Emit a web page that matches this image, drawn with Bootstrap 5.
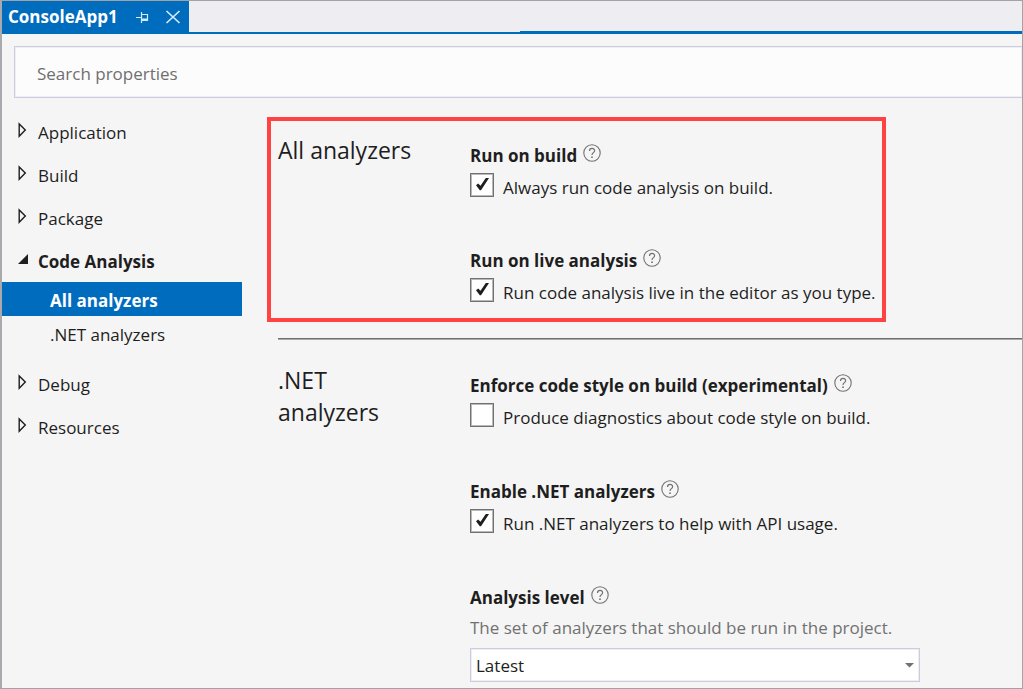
<!DOCTYPE html>
<html lang="en">
<head>
<meta charset="utf-8">
<meta name="viewport" content="width=device-width, initial-scale=1">
<title>ConsoleApp1</title>
<link href="https://cdn.jsdelivr.net/npm/bootstrap@5.3.0/dist/css/bootstrap.min.css" rel="stylesheet">
<style>
  :root { --vs-blue: #006cbe; --vs-ink: #1e1e1e; --vs-bg: #f5f5f5; --vs-line: #ccccdc; }
  body { font-family: "Open Sans", "Noto Sans", sans-serif; font-size: 17px; line-height: 24px; color: var(--vs-ink); background: var(--vs-bg); }
  button { font: inherit; color: inherit; background: none; border: 0; padding: 0; }
  .app-frame { border: 1px solid #a3a3a5; border-left: 2px solid #aaa9ae; }
  .tab-strip { height: 33px; background: #eeedf2; }
  .doc-tab { width: 187px; padding: 0 8px 2px 6px; background: var(--vs-blue); color: #fff; }
  .doc-name { font-size: 17px; font-weight: 700; }
  .strip-line { border-bottom: 2px solid var(--vs-blue); width: 331px; }
  .strip-line-thick { border-bottom: 3px solid var(--vs-blue); }
  .search-wrap { padding: 12px 0 0 12px; }
  .search-box, .search-box:focus { height: 52px; padding: 2px 22px 0; font-size: 17px; border: 1px solid var(--vs-line); border-right: 0; border-radius: 0; background: #fcfcfc; box-shadow: inset 0 0 0 1px #eeeef6; }
  .search-box::placeholder { color: #6f6f6f; opacity: 1; }
  .side { width: 265px; padding-top: 12px; }
  .side a { color: inherit; text-decoration: none; }
  .tree-row { height: 43px; padding: 2px 0 0 14px; gap: 7px; }
  .tree-row svg { margin-bottom: 5px; }
  .sub-list { width: 240px; margin-bottom: 12px; }
  .sub-row { height: 34px; padding: 4px 0 0 48px; }
  .sub-row.active { background: var(--vs-blue); color: #fff; font-weight: 700; }
  .side a.sub-row.active { color: #fff; }
  .main-pane { padding-top: 19px; min-width: 0; }
  .marked { max-width: 619px; border: 4px solid #ff4343; padding: 13px 0 10px 7px; }
  .pane-rule { height: 2px; margin: 16px 0 24px 11px; background: #a9a9a9; border-top: 1px solid #6f6f6f; }
  .plain { padding: 0 0 6px 11px; }
  .group-title { width: 192px; padding-right: 64px; font-size: 23px; line-height: 32px; font-weight: 400; margin: 0; }
  .group-title.wide { padding-right: 0; }
  .settings { padding-top: 9px; gap: 46px; min-width: 0; }
  .marked .settings { gap: 45px; }
  .setting-name { font-size: 17px; line-height: 26px; font-weight: 700; margin: 0 0 4px; gap: 6px; }
  .setting-name svg { display: block; margin-bottom: 6px; }
  .tick-row { gap: 9px; line-height: 30px; }
  .form-check-input.tick { width: 24px; height: 24px; margin: 0; border: 1px solid #717171; border-radius: 0; background-color: #fff; box-shadow: inset 0 0 0 1px #b9b9b9; }
  .form-check-input.tick:checked { background-color: #fff; border-color: #717171; background-size: 24px 24px; background-image: url("data:image/svg+xml,%3csvg xmlns='http://www.w3.org/2000/svg' viewBox='0 0 24 24'%3e%3cpath d='M6 12.200L8.200 10.400L10.500 12.800L15.800 5H19L11 17.200H9.800Z' fill='%231e1e1e'/%3e%3c/svg%3e"); }
  .hint { color: #717171; margin: 5px 0 8px; }
  .level-select { width: 450px; max-width: 100%; height: 34px; padding: 2px 24px 0 5px; font-size: 17px; line-height: 24px; color: var(--vs-ink); border: 1px solid var(--vs-line); border-radius: 0; box-shadow: inset 0 0 0 1px #eeeef6; background: #fff url("data:image/svg+xml,%3csvg xmlns='http://www.w3.org/2000/svg' viewBox='0 0 9 5'%3e%3cpath d='M0 0H9L4.500 4.500Z' fill='%23717171'/%3e%3c/svg%3e") no-repeat right 5px center / 9px 5px; }
</style>
</head>
<body>
<svg class="d-none" aria-hidden="true">
  <symbol id="closed" viewBox="0 0 15 16"><path d="M3.200 2V14.200L9.300 8.100Z" fill="none" stroke="#1e1e1e" stroke-width="1.400"/></symbol>
  <symbol id="opened" viewBox="0 0 15 16"><path d="M12 3V13H2Z" fill="#1e1e1e"/></symbol>
  <symbol id="help" viewBox="0 0 18 18"><circle cx="9" cy="9" r="8.200" fill="none" stroke="#717171" stroke-width="1.100"/><path d="M6.500 7C6.500 3.600 11.700 3.700 11.600 6.800C11.500 8.700 9 8.600 9 11" fill="none" stroke="#717171" stroke-width="1.200"/><circle cx="9" cy="13.200" r=".9" fill="#717171"/></symbol>
</svg>
<div class="app-frame min-vh-100">
  <header class="tab-strip d-flex">
    <div class="doc-tab d-flex align-items-center">
      <span class="doc-name me-auto">ConsoleApp1</span>
      <button type="button" class="d-flex me-3" aria-label="Pin tab"><svg width="13" height="12" viewBox="0 0 13 12" fill="none" stroke="#d5eaff"><path d="M0 6.500H5M5.500 1V12M5.500 3.500H11.500V9.500H5.500" stroke-width="1.200"/><path d="M5.500 8.500H12" stroke-width="2"/></svg></button>
      <button type="button" class="d-flex" aria-label="Close tab"><svg width="16" height="14" viewBox="0 0 16 14" fill="none" stroke="#d5eaff" stroke-width="1.700"><path d="M1.500 1L14.500 13M14.500 1L1.500 13"/></svg></button>
    </div>
    <div class="strip-line"></div>
    <div class="strip-line-thick flex-fill"></div>
  </header>
  <div class="search-wrap">
    <input type="search" class="form-control search-box" placeholder="Search properties" aria-label="Search properties">
  </div>
  <div class="d-flex">
    <nav class="side flex-shrink-0" aria-label="Property pages">
      <a href="#" class="tree-row d-flex align-items-center"><svg width="15" height="16"><use href="#closed"/></svg>Application</a>
      <a href="#" class="tree-row d-flex align-items-center"><svg width="15" height="16"><use href="#closed"/></svg>Build</a>
      <a href="#" class="tree-row d-flex align-items-center"><svg width="15" height="16"><use href="#closed"/></svg>Package</a>
      <a href="#" class="tree-row d-flex align-items-center fw-bold"><svg width="15" height="16"><use href="#opened"/></svg>Code Analysis</a>
      <div class="sub-list">
        <a href="#all" class="sub-row active d-flex align-items-center">All analyzers</a>
        <a href="#net" class="sub-row d-flex align-items-center">.NET analyzers</a>
      </div>
      <a href="#" class="tree-row d-flex align-items-center"><svg width="15" height="16"><use href="#closed"/></svg>Debug</a>
      <a href="#" class="tree-row d-flex align-items-center"><svg width="15" height="16"><use href="#closed"/></svg>Resources</a>
    </nav>
    <main class="main-pane flex-fill">
      <section id="all" class="marked d-flex">
        <h2 class="group-title wide flex-shrink-0">All analyzers</h2>
        <div class="settings d-flex flex-column flex-fill">
          <div>
            <h3 class="setting-name d-flex align-items-center">Run on build <button type="button" aria-label="Help"><svg width="18" height="18"><use href="#help"/></svg></button></h3>
            <div class="tick-row d-flex"><input type="checkbox" class="form-check-input tick flex-shrink-0" id="c1" checked><label for="c1">Always run code analysis on build.</label></div>
          </div>
          <div>
            <h3 class="setting-name d-flex align-items-center">Run on live analysis <button type="button" aria-label="Help"><svg width="18" height="18"><use href="#help"/></svg></button></h3>
            <div class="tick-row d-flex"><input type="checkbox" class="form-check-input tick flex-shrink-0" id="c2" checked><label for="c2">Run code analysis live in the editor as you type.</label></div>
          </div>
        </div>
      </section>
      <div class="pane-rule" role="separator"></div>
      <section id="net" class="plain d-flex">
        <h2 class="group-title flex-shrink-0">.NET analyzers</h2>
        <div class="settings d-flex flex-column flex-fill">
          <div>
            <h3 class="setting-name d-flex align-items-center">Enforce code style on build (experimental) <button type="button" aria-label="Help"><svg width="18" height="18"><use href="#help"/></svg></button></h3>
            <div class="tick-row d-flex"><input type="checkbox" class="form-check-input tick flex-shrink-0" id="c3"><label for="c3">Produce diagnostics about code style on build.</label></div>
          </div>
          <div>
            <h3 class="setting-name d-flex align-items-center">Enable .NET analyzers <button type="button" aria-label="Help"><svg width="18" height="18"><use href="#help"/></svg></button></h3>
            <div class="tick-row d-flex"><input type="checkbox" class="form-check-input tick flex-shrink-0" id="c4" checked><label for="c4">Run .NET analyzers to help with API usage.</label></div>
          </div>
          <div>
            <h3 class="setting-name d-flex align-items-center"><label for="level">Analysis level</label> <button type="button" aria-label="Help"><svg width="18" height="18"><use href="#help"/></svg></button></h3>
            <p class="hint">The set of analyzers that should be run in the project.</p>
            <select id="level" class="form-select level-select"><option>Latest</option><option>Preview</option></select>
          </div>
        </div>
      </section>
    </main>
  </div>
</div>
<script src="https://cdn.jsdelivr.net/npm/bootstrap@5.3.0/dist/js/bootstrap.bundle.min.js"></script>
</body>
</html>
